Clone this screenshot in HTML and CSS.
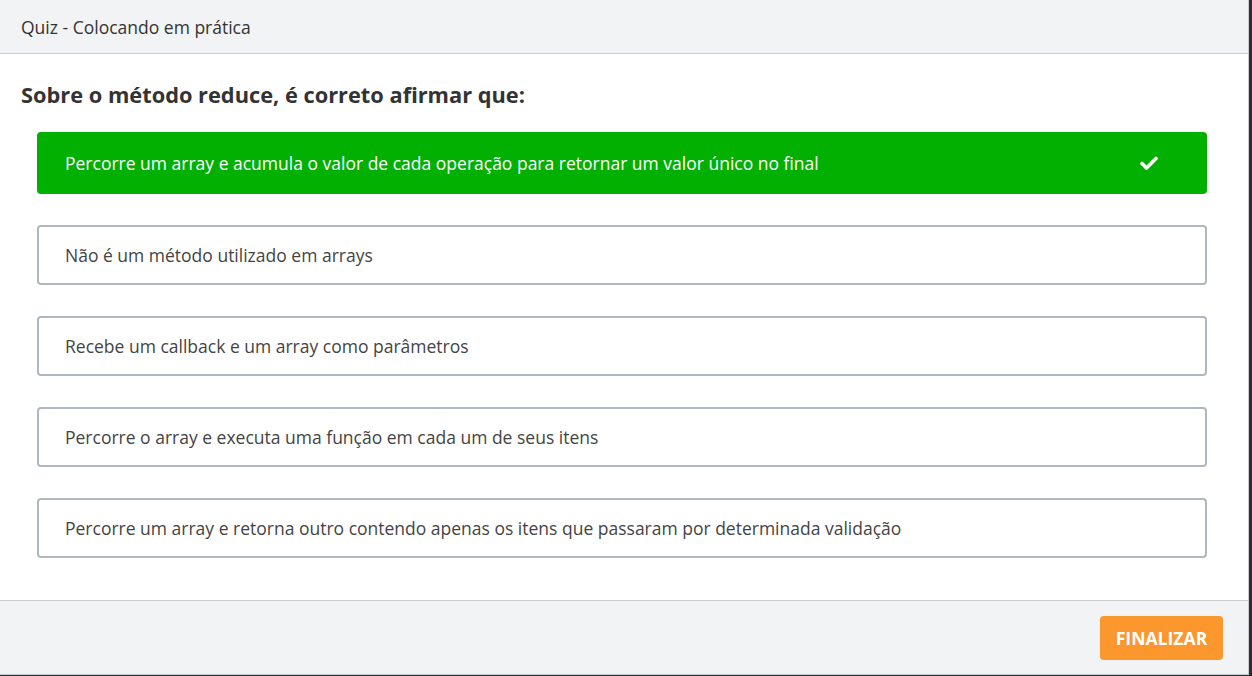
FILE: index.html
```html
<!DOCTYPE html>
<html lang="pt">
<head>
<meta charset="utf-8">
<link rel="stylesheet" href="styles.css">
</head>
<body>
<div class="modal">
  <header class="modal-header">Quiz - Colocando em prática</header>
  <main class="modal-body">
    <h2 class="question">Sobre o método reduce, é correto afirmar que:</h2>
    <ul class="options">
      <li class="option correct">
        <span>Percorre um array e acumula o valor de cada operação para retornar um valor único no final</span>
        <svg class="check" width="18" height="14" viewBox="0 0 18 14"><path d="M2 7.5 L6.5 12 L16 2.5" fill="none" stroke="#fff" stroke-width="3.6" stroke-linecap="round" stroke-linejoin="round"/></svg>
      </li>
      <li class="option"><span>Não é um método utilizado em arrays</span></li>
      <li class="option"><span>Recebe um callback e um array como parâmetros</span></li>
      <li class="option"><span>Percorre o array e executa uma função em cada um de seus itens</span></li>
      <li class="option"><span>Percorre um array e retorna outro contendo apenas os itens que passaram por determinada validação</span></li>
    </ul>
  </main>
  <footer class="modal-footer">
    <button class="btn-finish">FINALIZAR</button>
  </footer>
</div>
</body>
</html>
```
FILE: styles.css
```css
html, body {
  margin: 0;
  padding: 0;
  background: #2e2e2e;
  height: 676px;
  overflow: hidden;
}
body {
  font-family: "Open Sans", "Noto Sans", sans-serif;
  color: #333;
}
.modal {
  width: 1248px;
  height: 674px;
  background: #fff;
  border-right: 1px solid #c8ccd1;
  border-bottom: 1px solid #c8ccd1;
  display: flex;
  flex-direction: column;
}
.modal-header {
  height: 53px;
  border-bottom: 1px solid #c9ced4;
  background: #f2f3f5;
  display: flex;
  align-items: center;
  padding-left: 21px;
  font-size: 17.5px;
  color: #333;
}
.modal-body {
  flex: 1;
  padding: 25px 41px 0 37px;
}
.question {
  margin: 0 0 22px -16px;
  font-size: 21.8px;
  line-height: 31px;
  font-weight: 700;
  color: #333;
}
.options {
  list-style: none;
  margin: 0;
  padding: 0;
  display: flex;
  flex-direction: column;
  gap: 31px;
}
.option {
  height: 56px;
  border: 2px solid #b1b7be;
  border-radius: 4px;
  display: flex;
  align-items: center;
  justify-content: space-between;
  padding: 0 48px 0 26px;
  font-size: 17.5px;
  color: #444;
}
.option.correct {
  height: 62px;
  border: none;
  background: #01b001;
  color: #fff;
  padding: 0 49px 0 28px;
}
.check {
  display: block;
}
.modal-footer {
  height: 73px;
  border-top: 1px solid #c9ced4;
  background: #f2f3f5;
  display: flex;
  align-items: center;
  justify-content: flex-end;
  padding-right: 25px;
}
.btn-finish {
  width: 123px;
  height: 44px;
  border: none;
  border-radius: 4px;
  background: #fb972d;
  color: #fff;
  font-family: "Open Sans", "Noto Sans", sans-serif;
  font-weight: 700;
  font-size: 17.6px;
  padding: 0;
}
```
